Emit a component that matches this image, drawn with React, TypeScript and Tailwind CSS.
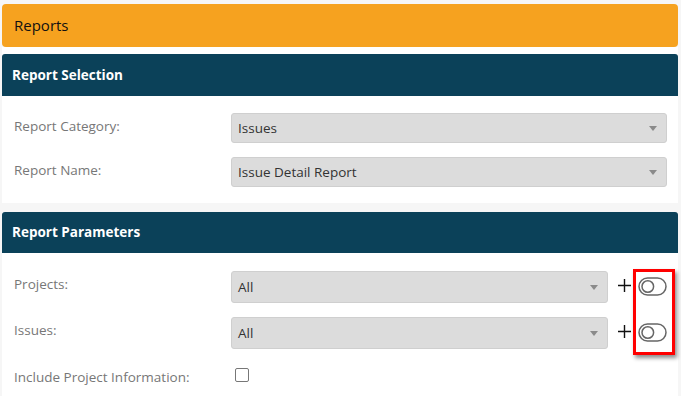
import React from 'react';

const font = { fontFamily: '"Open Sans", "Noto Sans", sans-serif' };

function SelectBox({ value, className = '' }: {value: string;className?: string;}) {
  return (
    <div
      className={`flex h-full items-center justify-between rounded-[3px] border border-[#cfcfcf] bg-[#dcdcdc] pl-[6px] pr-[9px] text-[13.5px] text-[#333] ${className}`}>
      <span>{value}</span>
      <svg width="8" height="5" viewBox="0 0 8 5">
        <path d="M0 0 H8 L4 5 Z" fill="#8a8a8a" />
      </svg>
    </div>);

}

function Toggle() {
  return (
    <svg width="29" height="19" viewBox="0 0 29 19">
      <rect x="1" y="1" width="27" height="17" rx="8.5" fill="#fff" stroke="#666" strokeWidth="1.5" />
      <circle cx="9.8" cy="9.5" r="5.8" fill="#fff" stroke="#666" strokeWidth="1.5" />
    </svg>);

}

function Plus() {
  return (
    <svg width="13" height="13" viewBox="0 0 13 13">
      <path d="M6.5 0 V13 M0 6.5 H13" stroke="#111" strokeWidth="1.4" />
    </svg>);

}

function SectionHeader({ title, className = '' }: {title: string;className?: string;}) {
  return (
    <div
      className={`flex shrink-0 items-center rounded-t-[3px] bg-[#0b4159] pl-[10px] text-[13.5px] font-bold text-white ${className}`}>
      {title}
    </div>);

}

export default function App() {
  return (
    <div className="relative flex h-[396px] w-[681px] flex-col overflow-hidden bg-[#f6f6f6] pl-[2px] pr-[3px] pt-[4px]" style={font}>
      <div className="flex h-[43px] shrink-0 items-center rounded-[4px] bg-[#f6a21f] pl-[12px] text-[15px] text-[#111]">
        Reports
      </div>
      <div className="shrink-0 bg-white pt-[7px]">
        <SectionHeader title="Report Selection" className="h-[42px]" />
        <div className="flex flex-col gap-[14px] pb-[16px] pt-[17px]">
          <div className="flex h-[30px]">
            <div className="w-[229px] pl-[12px] pt-[3px] text-[13.5px] text-[#777]">Report Category:</div>
            <SelectBox value="Issues" className="w-[436px]" />
          </div>
          <div className="flex h-[30px]">
            <div className="w-[229px] pl-[12px] pt-[3px] text-[13.5px] text-[#777]">Report Name:</div>
            <SelectBox value="Issue Detail Report" className="w-[436px]" />
          </div>
        </div>
      </div>
      <div className="h-[9px] shrink-0" />
      <div className="flex-1 bg-white">
        <SectionHeader title="Report Parameters" className="h-[41px]" />
        <div className="flex flex-col gap-[14px] pt-[18px]">
          <div className="flex h-[32px] items-stretch">
            <div className="w-[229px] pl-[12px] pt-[3px] text-[13.5px] text-[#777]">Projects:</div>
            <SelectBox value="All" className="w-[377px]" />
            <span className="ml-[10px] flex items-center pb-[4px]"><Plus /></span>
            <span className="ml-[7px] flex items-center pb-[2px]"><Toggle /></span>
          </div>
          <div className="flex h-[32px] items-stretch">
            <div className="w-[229px] pl-[12px] pt-[3px] text-[13.5px] text-[#777]">Issues:</div>
            <SelectBox value="All" className="w-[377px]" />
            <span className="ml-[10px] flex items-center pb-[4px]"><Plus /></span>
            <span className="ml-[7px] flex items-center pb-[2px]"><Toggle /></span>
          </div>
          <div className="flex h-[28px] items-center">
            <div className="w-[233px] pl-[12px] text-[13.5px] text-[#777]">Include Project Information:</div>
            <div className="mb-[4px] h-[14px] w-[14px] rounded-[2px] border border-[#777] bg-white" />
          </div>
        </div>
      </div>
      <div className="absolute left-[633px] top-[269px] h-[86px] w-[42px] border-[3px] border-[#ff0000] shadow-[2px_3px_4px_rgba(0,0,0,0.45)]" />
    </div>);

}
